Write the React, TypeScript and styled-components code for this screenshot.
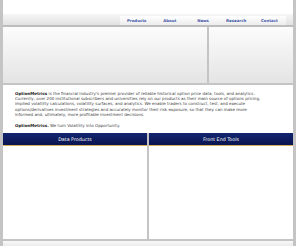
import React from "react";
import styled, { createGlobalStyle } from "styled-components";

const Global = createGlobalStyle`
  html, body { margin: 0; padding: 0; background: #ffffff; }
  #root { width: 296px; height: 246px; }
`;

const Frame = styled.div`
  width: 296px;
  height: 246px;
  box-sizing: border-box;
  background: #c4c4c4;
  padding: 0 3px;
  display: flex;
  flex-direction: column;
  font-family: "DejaVu Sans", Verdana, sans-serif;
  overflow: hidden;
`;

const TopStrip = styled.div`
  height: 14px;
  background: #ffffff;
`;

const NavBar = styled.div`
  height: 11px;
  display: flex;
  justify-content: flex-end;
  align-items: flex-end;
  padding-right: 7px;
  background: linear-gradient(#f6f6f6, #e2e2e2);
  border-bottom: 2px solid #bdbdbd;
`;

const Tabs = styled.div`
  display: flex;
  height: 9px;
  background: linear-gradient(#ffffff, #ececec);
`;

const Tab = styled.div`
  width: 33.2px;
  display: flex;
  align-items: center;
  justify-content: center;
  font-size: 3.9px;
  font-weight: bold;
  color: #4254a8;
`;

const BannerRow = styled.div`
  display: flex;
  gap: 2px;
  height: 56px;
`;

const Banner = styled.div<{ $w: number }>`
  width: ${(p) => p.$w}px;
  background: linear-gradient(#fcfcfd 0%, #f0f0f0 50%, #e4e4e4 100%);
`;

const Intro = styled.div`
  margin-top: 2px;
  height: 48px;
  background: #ffffff;
  padding: 5.5px 0 0 12px;
  box-sizing: border-box;
  color: #444444;
  font-size: 4.05px;
  line-height: 5.45px;
`;

const Para = styled.p`
  margin: 0 0 5.4px 0;
  width: 268px;
`;

const Brand = styled.b`
  color: #222222;
`;

const Columns = styled.div`
  display: flex;
  gap: 2px;
  height: 106px;
`;

const Column = styled.div`
  flex: 1;
  display: flex;
  flex-direction: column;
  background: #ffffff;
`;

const ColHead = styled.div`
  height: 12px;
  background: linear-gradient(#122670, #0a1450);
  border-bottom: 1px solid #d6b25a;
  color: #ffffff;
  font-size: 4.8px;
  display: flex;
  align-items: center;
  justify-content: center;
`;

const Footer = styled.div`
  margin-top: 2px;
  flex: 1;
  background: linear-gradient(#f8f8f8, #ececec);
`;

export default function App() {
  const tabs = ["Products", "About", "News", "Research", "Contact"];
  return (
    <>
      <Global />
      <Frame>
        <TopStrip />
        <NavBar>
          <Tabs>
            {tabs.map((t) => (
              <Tab key={t}>{t}</Tab>
            ))}
          </Tabs>
        </NavBar>
        <BannerRow>
          <Banner $w={204} />
          <Banner $w={84} />
        </BannerRow>
        <Intro>
          <Para>
            <Brand>OptionMetrics</Brand> is the financial industry's premier provider of reliable
            historical option price data, tools, and analytics.
            <br />
            Currently, over 200 institutional subscribers and universities rely on our products as
            their main source of options pricing,
            <br />
            implied volatility calculations, volatility surfaces, and analytics. We enable traders to
            construct, test, and execute
            <br />
            options/derivatives investment strategies and accurately monitor their risk exposure, so
            that they can make more
            <br />
            informed and, ultimately, more profitable investment decisions.
          </Para>
          <Para>
            <Brand>OptionMetrics.</Brand> We turn Volatility into Opportunity.
          </Para>
        </Intro>
        <Columns>
          <Column>
            <ColHead>Data Products</ColHead>
          </Column>
          <Column>
            <ColHead>Front End Tools</ColHead>
          </Column>
        </Columns>
        <Footer />
      </Frame>
    </>
  );
}
